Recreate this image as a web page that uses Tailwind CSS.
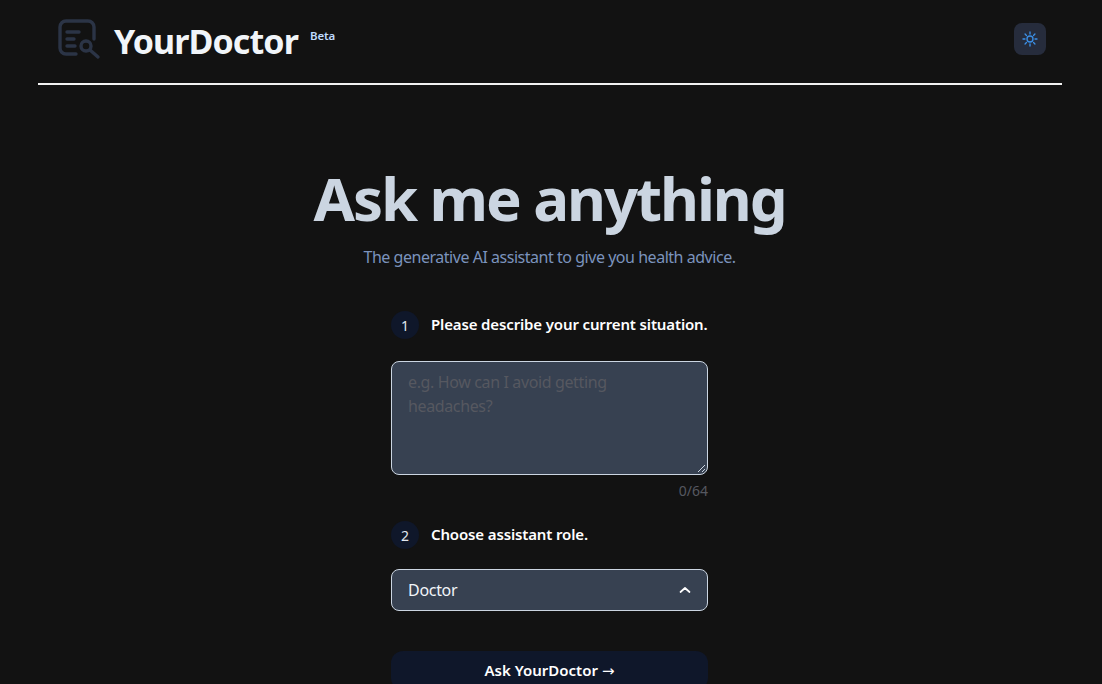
<!doctype html>
<html lang="en"><head><meta charset="utf-8"><title>YourDoctor</title>
<script src="https://cdn.jsdelivr.net/npm/@tailwindcss/browser@4"></script></head>
<body class="bg-[#121212] h-[684px] overflow-hidden font-['Noto_Sans',sans-serif] text-white">
<div class="w-[1024px] ml-[38px]">
  <header class="h-[85px] border-b-2 border-white/95 px-4 pl-[20px] flex items-start justify-between">
    <div class="flex items-start pt-[18px]">
      <svg class="w-[44px] h-[44px] text-[#2b3446]" viewBox="0 0 44 44" fill="none" stroke="currentColor" stroke-width="3.4" stroke-linecap="round" stroke-linejoin="round"><path d="M18 36H8a6 6 0 0 1-6-6V9a6 6 0 0 1 6-6h22a6 6 0 0 1 6 6v12"/><path d="M9 14h12M9 21h7M9 28h8"/><circle cx="28" cy="28" r="5"/><path d="M32 32l8 7"/></svg>
      <span class="ml-[12px] text-[34px] leading-[46px] font-bold tracking-[-0.9px] text-[#f1f5f9]">YourDoctor</span>
      <span class="ml-[12px] mt-[10px] text-[11.5px] leading-[16px] font-semibold tracking-[-0.2px] text-[#bfdbfe]">Beta</span>
    </div>
    <button class="mt-[23px] w-8 h-8 rounded-lg bg-[#262c3c] flex items-center justify-center">
      <svg class="w-4 h-4 text-[#3b8fe6]" viewBox="0 0 24 24" fill="none" stroke="currentColor" stroke-width="2" stroke-linecap="round"><circle cx="12" cy="12" r="4.5"/><path d="M12 1.5v3M12 19.5v3M1.5 12h3M19.5 12h3M4.6 4.6l2.1 2.1M17.3 17.3l2.1 2.1M4.6 19.4l2.1-2.1M17.3 6.7l2.1-2.1"/></svg>
    </button>
  </header>
  <main class="w-[1023px] flex flex-col items-center">
    <h1 class="mt-[78px] text-[60px] leading-[70px] font-bold tracking-[-2.1px] text-[#cbd5e1]">Ask me anything</h1>
    <p class="mt-[12px] text-[16px] leading-[24px] tracking-[-0.47px] text-[#7b93bd]">The generative AI assistant to give you health advice.</p>
    <div class="w-[317px] mt-[42px]">
      <div class="flex items-center h-7">
        <span class="w-7 h-7 rounded-full bg-[#0f172a] flex items-center justify-center text-[14px] text-[#e2e8f0]">1</span>
        <span class="ml-3 -mt-[2px] whitespace-nowrap text-[15px] font-semibold tracking-[-0.14px] text-white">Please describe your current situation.</span>
      </div>
      <div class="mt-[22px] h-[114px] rounded-lg border border-[#cbd5e1] bg-[#374151] px-4 py-2 text-[16px] leading-6 tracking-[-0.37px] text-[#565860] relative">
        e.g. How can I avoid getting<br>headaches?
        <svg class="absolute right-0 bottom-0 w-3 h-3 text-[#cbd5e1]" viewBox="0 0 12 12" stroke="currentColor" fill="none"><path d="M3 10l7-7M7 10l3-3"/></svg>
      </div>
      <p class="mt-[6px] text-right text-[14px] leading-5 text-[#565860]">0/64</p>
      <div class="mt-[20px] flex items-center h-7">
        <span class="w-7 h-7 rounded-full bg-[#0f172a] flex items-center justify-center text-[14px] text-[#e2e8f0]">2</span>
        <span class="ml-3 -mt-[2px] whitespace-nowrap text-[15px] font-semibold tracking-[-0.14px] text-white">Choose assistant role.</span>
      </div>
      <div class="mt-[20px] h-[42px] rounded-lg border border-[#cbd5e1] bg-[#374151] pl-4 pr-4 flex items-center justify-between text-[16px] tracking-[-0.3px] text-[#f1f5f9]">
        <span>Doctor</span>
        <svg class="w-3 h-3 text-white" viewBox="0 0 12 12" fill="none" stroke="currentColor" stroke-width="1.7" stroke-linecap="round" stroke-linejoin="round"><path d="M1.5 8l4.5-4 4.5 4"/></svg>
      </div>
      <button class="mt-[40px] w-full h-[39px] rounded-xl bg-[#0f172a] text-[15px] font-semibold text-white">Ask YourDoctor <span class="font-['DejaVu_Sans'] font-normal">→</span></button>
    </div>
  </main>
</div>
</body></html>
